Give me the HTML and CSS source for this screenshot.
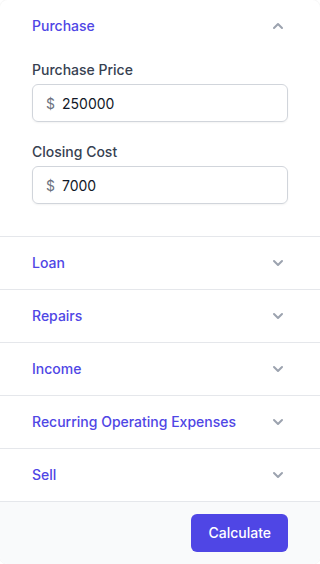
FILE: index.html
```html
<!DOCTYPE html>
<html lang="en">
<head>
    <meta charset="UTF-8">
    <meta name="viewport" content="width=device-width, initial-scale=1.0">
    <title>Rental Calculator</title>
    <link rel="stylesheet" href="styles.css">
</head>
<body>
    <div class="card">
        <div class="secao">
            <button class="cabecalho">
                <span>Purchase</span>
                <svg class="seta aberta" viewBox="0 0 20 20" fill="currentColor"><path fill-rule="evenodd" d="M5.293 7.293a1 1 0 011.414 0L10 10.586l3.293-3.293a1 1 0 111.414 1.414l-4 4a1 1 0 01-1.414 0l-4-4a1 1 0 010-1.414z" clip-rule="evenodd"/></svg>
            </button>
            <div class="painel">
                <label class="campo">
                    <span class="rotulo">Purchase Price</span>
                    <span class="entrada"><span class="moeda">$</span><input type="text" value="250000"></span>
                </label>
                <label class="campo">
                    <span class="rotulo">Closing Cost</span>
                    <span class="entrada"><span class="moeda">$</span><input type="text" value="7000"></span>
                </label>
            </div>
        </div>
        <div class="secao">
            <button class="cabecalho">
                <span>Loan</span>
                <svg class="seta" viewBox="0 0 20 20" fill="currentColor"><path fill-rule="evenodd" d="M5.293 7.293a1 1 0 011.414 0L10 10.586l3.293-3.293a1 1 0 111.414 1.414l-4 4a1 1 0 01-1.414 0l-4-4a1 1 0 010-1.414z" clip-rule="evenodd"/></svg>
            </button>
        </div>
        <div class="secao">
            <button class="cabecalho">
                <span>Repairs</span>
                <svg class="seta" viewBox="0 0 20 20" fill="currentColor"><path fill-rule="evenodd" d="M5.293 7.293a1 1 0 011.414 0L10 10.586l3.293-3.293a1 1 0 111.414 1.414l-4 4a1 1 0 01-1.414 0l-4-4a1 1 0 010-1.414z" clip-rule="evenodd"/></svg>
            </button>
        </div>
        <div class="secao">
            <button class="cabecalho">
                <span>Income</span>
                <svg class="seta" viewBox="0 0 20 20" fill="currentColor"><path fill-rule="evenodd" d="M5.293 7.293a1 1 0 011.414 0L10 10.586l3.293-3.293a1 1 0 111.414 1.414l-4 4a1 1 0 01-1.414 0l-4-4a1 1 0 010-1.414z" clip-rule="evenodd"/></svg>
            </button>
        </div>
        <div class="secao">
            <button class="cabecalho">
                <span>Recurring Operating Expenses</span>
                <svg class="seta" viewBox="0 0 20 20" fill="currentColor"><path fill-rule="evenodd" d="M5.293 7.293a1 1 0 011.414 0L10 10.586l3.293-3.293a1 1 0 111.414 1.414l-4 4a1 1 0 01-1.414 0l-4-4a1 1 0 010-1.414z" clip-rule="evenodd"/></svg>
            </button>
        </div>
        <div class="secao">
            <button class="cabecalho">
                <span>Sell</span>
                <svg class="seta" viewBox="0 0 20 20" fill="currentColor"><path fill-rule="evenodd" d="M5.293 7.293a1 1 0 011.414 0L10 10.586l3.293-3.293a1 1 0 111.414 1.414l-4 4a1 1 0 01-1.414 0l-4-4a1 1 0 010-1.414z" clip-rule="evenodd"/></svg>
            </button>
        </div>
        <div class="rodape">
            <button class="botao-calcular">Calculate</button>
        </div>
    </div>
</body>
</html>
```

FILE: styles.css
```css
body {
    margin: 0;
    font-family: Inter, "Noto Sans", sans-serif;
    background: #ffffff;
}
.card {
    width: 320px;
    height: 564px;
    box-sizing: border-box;
    border-radius: 8px;
    overflow: hidden;
    background: #ffffff;
    display: flex;
    flex-direction: column;
    box-shadow: 0 0 0 1px rgba(0, 0, 0, 0.03);
}
.secao {
    border-bottom: 1px solid #e5e7eb;
}
.cabecalho {
    display: flex;
    justify-content: space-between;
    align-items: center;
    width: 100%;
    padding: 16px 32px;
    border: none;
    background: none;
    font-family: inherit;
    font-size: 14px;
    line-height: 20px;
    font-weight: 500;
    color: #4f46e5;
    text-align: left;
    cursor: pointer;
}
.seta {
    width: 20px;
    height: 20px;
    color: #9ca3af;
}
.seta.aberta {
    transform: rotate(180deg);
}
.painel {
    padding: 8px 32px 32px;
    display: flex;
    flex-direction: column;
    gap: 20px;
}
.campo {
    display: flex;
    flex-direction: column;
    gap: 4px;
}
.rotulo {
    font-size: 14px;
    line-height: 20px;
    font-weight: 500;
    color: #374151;
}
.entrada {
    display: flex;
    align-items: center;
    height: 38px;
    box-sizing: border-box;
    border: 1px solid #d1d5db;
    border-radius: 6px;
    padding: 0 13px;
    box-shadow: 0 1px 2px rgba(0, 0, 0, 0.05);
}
.moeda {
    font-size: 14px;
    color: #6b7280;
    width: 16px;
}
.entrada input {
    border: none;
    outline: none;
    padding: 0;
    flex: 1;
    min-width: 0;
    font-family: inherit;
    font-size: 14px;
    color: #111827;
    background: none;
}
.rodape {
    flex: 1;
    background: #f9fafb;
    display: flex;
    justify-content: flex-end;
    align-items: flex-start;
    padding: 12px 32px;
}
.botao-calcular {
    padding: 9px 17px;
    border: none;
    border-radius: 6px;
    background: #4f46e5;
    color: #ffffff;
    font-family: inherit;
    font-size: 14px;
    line-height: 20px;
    font-weight: 500;
    cursor: pointer;
}
```
